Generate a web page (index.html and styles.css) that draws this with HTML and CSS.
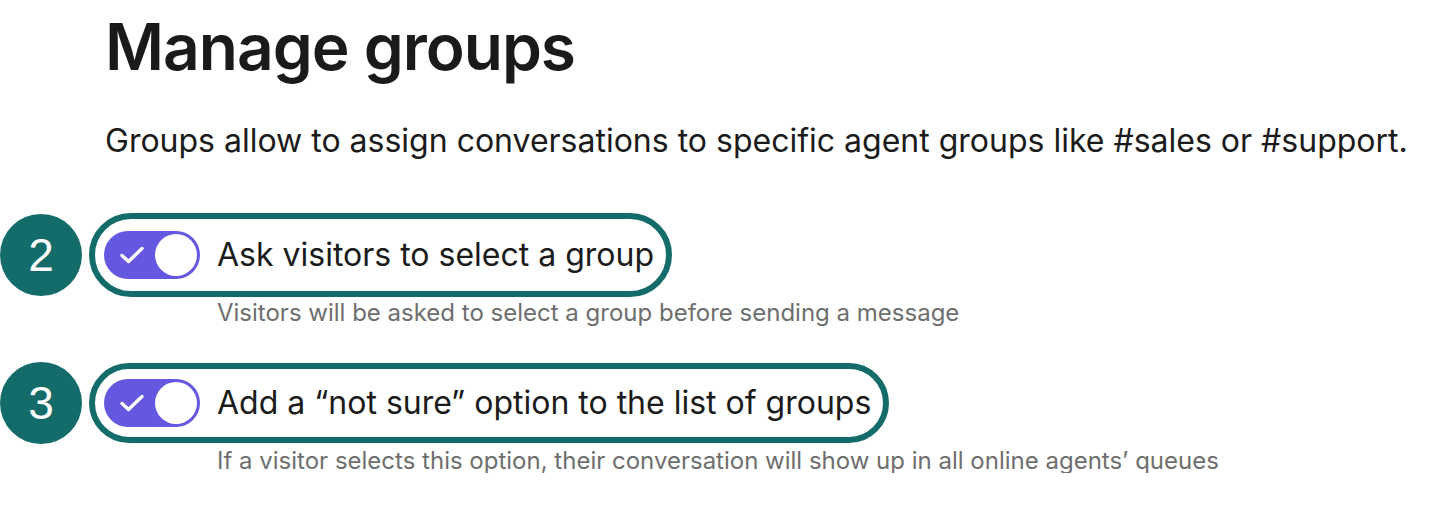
FILE: index.html
```html
<!DOCTYPE html>
<html lang="en">
<head>
    <meta charset="UTF-8">
    <meta name="viewport" content="width=device-width, initial-scale=1.0">
    <title>Manage groups</title>
    <link rel="stylesheet" href="styles.css">
</head>
<body>
    <div class="page">
        <h1 class="title">Manage groups</h1>
        <p class="intro">Groups allow to assign conversations to specific agent groups like #sales or #support.</p>

        <div class="option">
            <div class="option-row">
                <span class="step">2</span>
                <div class="outline">
                    <span class="toggle">
                        <svg class="check" viewBox="0 0 26 20" width="26" height="20"><path d="M3 10.5 L9.5 16.5 L23 3.5" fill="none" stroke="#fff" stroke-width="3.4" stroke-linecap="round" stroke-linejoin="round"/></svg>
                        <span class="knob"></span>
                    </span>
                    <span class="label">Ask visitors to select a group</span>
                </div>
            </div>
            <p class="hint">Visitors will be asked to select a group before sending a message</p>
        </div>

        <div class="option">
            <div class="option-row">
                <span class="step">3</span>
                <div class="outline outline-tight">
                    <span class="toggle">
                        <svg class="check" viewBox="0 0 26 20" width="26" height="20"><path d="M3 10.5 L9.5 16.5 L23 3.5" fill="none" stroke="#fff" stroke-width="3.4" stroke-linecap="round" stroke-linejoin="round"/></svg>
                        <span class="knob"></span>
                    </span>
                    <span class="label">Add a “not sure” option to the list of groups</span>
                </div>
            </div>
            <p class="hint hint-last">If a visitor selects this option, their conversation will show up in all online agents’ queues</p>
        </div>
    </div>
</body>
</html>
```

FILE: styles.css
```css
body {
    margin: 0;
    background: #ffffff;
    font-family: Inter, 'Noto Sans', sans-serif;
    color: #1b1b1b;
}
.page {
    padding-top: 15px;
}
.title {
    margin: 0 0 0 105px;
    font-size: 64px;
    line-height: 1;
    font-weight: 600;
    letter-spacing: -1px;
    color: #1a1a1a;
}
.intro {
    margin: 46px 0 0 105px;
    font-size: 32px;
    line-height: 1;
    color: #1b1b1b;
}
.option {
    margin-top: 56px;
}
.option + .option {
    margin-top: 37px;
}
.option-row {
    display: flex;
    align-items: center;
    gap: 7px;
}
.step {
    width: 82px;
    height: 82px;
    border-radius: 50%;
    background: #136c69;
    color: #ffffff;
    font-family: 'Liberation Sans', Arial, sans-serif;
    font-size: 46px;
    display: flex;
    align-items: center;
    justify-content: center;
    flex-shrink: 0;
}
.outline {
    display: flex;
    align-items: center;
    gap: 17px;
    border: 6px solid #136c69;
    border-radius: 42px;
    padding: 12px 12px 12px 9px;
}
.outline-tight {
    padding-top: 10px;
    padding-bottom: 10px;
}
.toggle {
    width: 96px;
    height: 48px;
    border-radius: 24px;
    background: #6558e0;
    display: flex;
    align-items: center;
    justify-content: space-between;
    padding: 0 3px 0 15px;
    box-sizing: border-box;
    flex-shrink: 0;
}
.knob {
    width: 42px;
    height: 42px;
    border-radius: 50%;
    background: #ffffff;
}
.label {
    font-size: 32px;
    line-height: 1;
    color: #1b1b1b;
}
.hint {
    margin: 4px 0 0 217px;
    font-size: 24px;
    line-height: 1;
    color: #6e6e6e;
}
.hint-last {
    margin-top: 5px;
}
```
